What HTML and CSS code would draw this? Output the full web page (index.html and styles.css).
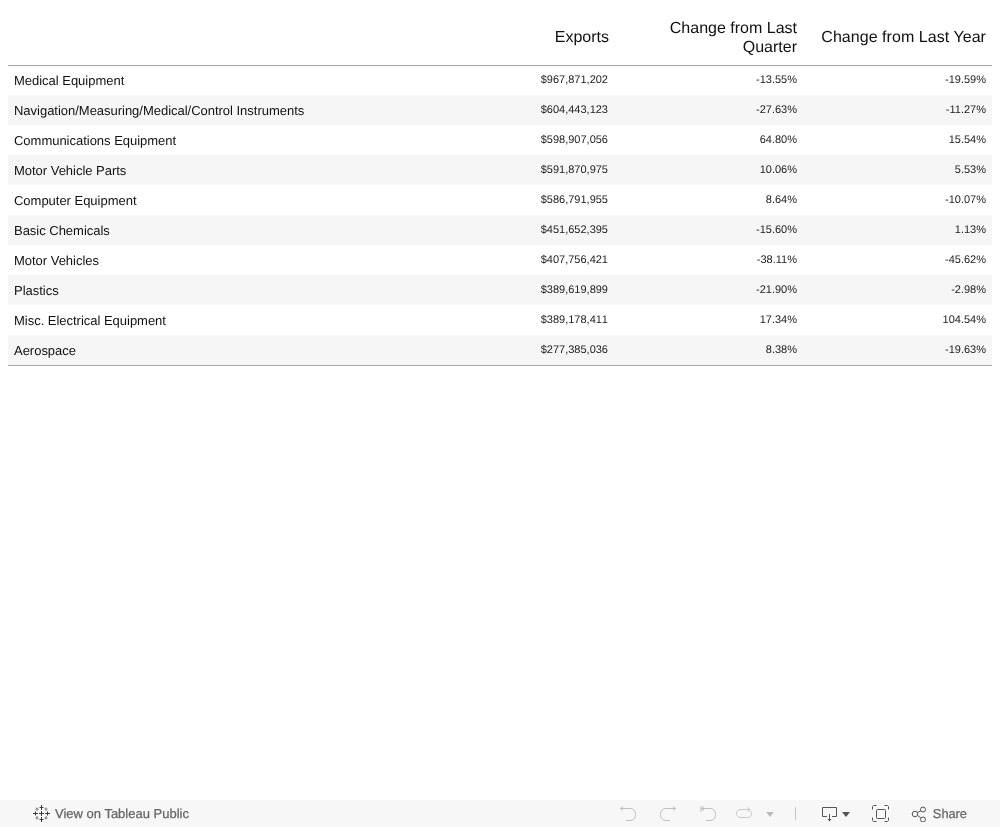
FILE: index.html
```html
<!DOCTYPE html>
<html lang="en">
<head>
<meta charset="utf-8">
<title>Exports</title>
<link rel="stylesheet" href="styles.css">
</head>
<body>
<div class="page">
  <main class="viz">
    <div class="row head">
      <div class="cell"></div>
      <div class="cell num exports">Exports</div>
      <div class="cell num quarter">Change from Last Quarter</div>
      <div class="cell num wide">Change from Last Year</div>
    </div>
    <div class="rows">
      <div class="row"><div class="cell name">Medical Equipment</div><div class="cell val money">$967,871,202</div><div class="cell val">-13.55%</div><div class="cell val">-19.59%</div></div>
      <div class="row"><div class="cell name">Navigation/Measuring/Medical/Control Instruments</div><div class="cell val money">$604,443,123</div><div class="cell val">-27.63%</div><div class="cell val">-11.27%</div></div>
      <div class="row"><div class="cell name">Communications Equipment</div><div class="cell val money">$598,907,056</div><div class="cell val">64.80%</div><div class="cell val">15.54%</div></div>
      <div class="row"><div class="cell name">Motor Vehicle Parts</div><div class="cell val money">$591,870,975</div><div class="cell val">10.06%</div><div class="cell val">5.53%</div></div>
      <div class="row"><div class="cell name">Computer Equipment</div><div class="cell val money">$586,791,955</div><div class="cell val">8.64%</div><div class="cell val">-10.07%</div></div>
      <div class="row"><div class="cell name">Basic Chemicals</div><div class="cell val money">$451,652,395</div><div class="cell val">-15.60%</div><div class="cell val">1.13%</div></div>
      <div class="row"><div class="cell name">Motor Vehicles</div><div class="cell val money">$407,756,421</div><div class="cell val">-38.11%</div><div class="cell val">-45.62%</div></div>
      <div class="row"><div class="cell name">Plastics</div><div class="cell val money">$389,619,899</div><div class="cell val">-21.90%</div><div class="cell val">-2.98%</div></div>
      <div class="row"><div class="cell name">Misc. Electrical Equipment</div><div class="cell val money">$389,178,411</div><div class="cell val">17.34%</div><div class="cell val">104.54%</div></div>
      <div class="row"><div class="cell name">Aerospace</div><div class="cell val money">$277,385,036</div><div class="cell val">8.38%</div><div class="cell val">-19.63%</div></div>
    </div>
  </main>
  <footer class="toolbar">
    <div class="public">
      <svg class="logo" width="17" height="17" viewBox="0 0 17 17" fill="none" stroke="#3c3c3c" stroke-width="1">
        <path d="M8.500 0v5M6.500 2.500h4M8.500 12v5M6.500 14.500h4M0 8.500h5M2.500 6.500v4M12 8.500h5M14.500 6.500v4"/>
        <path d="M8.500 6v5M6 8.500h5"/>
        <path d="M4 2.500v3.500M2.500 4h3M13 2.500v3.500M11.500 4h3M4 11v3.500M2.500 13h3M13 11v3.500M11.500 13h3" stroke="#666" stroke-width="0.8"/>
      </svg>
      <span>View on Tableau Public</span>
    </div>
    <div class="tools">
      <svg class="t-undo" width="18" height="17" viewBox="0 0 18 17" fill="none" stroke="#bdbdbd" stroke-width="1"><path d="M1.500 3.500H11C14.500 3.500 16.500 6 16.500 9.500S14.500 15.500 11 15.500H7M4 1.500L1.500 3.500 4 5.500"/></svg>
      <svg class="t-redo" width="18" height="17" viewBox="0 0 18 17" fill="none" stroke="#bdbdbd" stroke-width="1"><path d="M16.500 3.500H7C3.500 3.500 1.500 6 1.500 9.500S3.500 15.500 7 15.500H11M14 1.500L16.500 3.500 14 5.500"/></svg>
      <svg class="t-revert" width="18" height="17" viewBox="0 0 18 17" fill="none" stroke="#bdbdbd" stroke-width="1"><path d="M2 1v6M2.500 3.500H11C14.500 3.500 16.500 6 16.500 9.500S14.500 15.500 11 15.500H7M5 1.500L2.500 3.500 5 5.500"/></svg>
      <svg class="t-refresh" width="16" height="13" viewBox="0 0 16 13" fill="none" stroke="#c8c8c8" stroke-width="1"><path d="M14 2.500H5C2.500 2.500.5 4 .5 6.500S2.500 10.500 5 10.500h6.500C14 10.500 15.500 9 15.500 6.500 15.500 5 15 4 14 3.500M11.500.5L14 2.500 11.500 4.500"/></svg>
      <span class="caret light"></span>
      <span class="sep"></span>
      <svg class="t-device" width="17" height="17" viewBox="0 0 17 17" fill="none" stroke="#555" stroke-width="1"><path d="M6 11.500H1.500v-9h14v9H11M8.500 9v6"/><path d="M6.500 14h4l-2 2.500z" fill="#555" stroke="none"/></svg>
      <span class="caret"></span>
      <svg class="t-full" width="17" height="17" viewBox="0 0 17 17" fill="none" stroke="#555" stroke-width="1"><path d="M.5 4.500v-3l1-1h3M12.500.5h3l1 1v3M16.500 12.500v3l-1 1h-3M4.500 16.500h-3l-1-1v-3"/><rect x="4.500" y="4.500" width="9" height="9" rx="1"/></svg>
      <div class="share">
        <svg width="17" height="17" viewBox="0 0 17 17" fill="none" stroke="#555" stroke-width="1"><circle cx="5" cy="9" r="2.800"/><circle cx="13" cy="4.500" r="2.500"/><circle cx="13" cy="14.500" r="2.500"/><path d="M7.500 7.600l3.300-1.900M7.500 10.400l3.300 2.500"/></svg>
        <span>Share</span>
      </div>
    </div>
  </footer>
</div>
</body>
</html>
```
FILE: styles.css
```css
* { box-sizing: border-box; }
html, body { margin: 0; padding: 0; background: #fff; }
body { font-family: "Liberation Sans", Arial, sans-serif; color: #000; text-rendering: geometricPrecision; }
.page { height: 827px; display: flex; flex-direction: column; overflow: hidden; will-change: opacity; }
.viz { flex: 1; padding: 8px 8px 0; }
.row { display: grid; grid-template-columns: 417px 189px 189px 189px; height: 30px; align-items: center; }
.rows { border-bottom: 1px solid #a9a9a9; }
.rows .row:first-child { box-shadow: inset 0 1px 0 #a9a9a9; }
.rows .row:nth-child(even) { background: #f6f6f6; }
.head { height: 57px; font-size: 16px; line-height: 19px; padding-top: 1px; }
.cell { padding: 0 6px; }
.num { text-align: right; color: #111; padding-left: 30px; }
.exports { padding-right: 5px; }
.quarter { padding-top: 2px; }
.wide { padding-left: 0; white-space: nowrap; letter-spacing: 0.05px; }
.name { font-size: 13px; line-height: 15px; color: #111; letter-spacing: -0.02px; }
.val { font-size: 11px; line-height: 13px; text-align: right; color: #222; }
.money { font-kerning: none; }
.toolbar { height: 27px; background: #f7f7f7; display: flex; justify-content: space-between; align-items: center; }
.public { display: flex; align-items: center; gap: 5px; padding-left: 33px; }
.public span, .share span { font-family: "Liberation Sans", Arial, sans-serif; font-size: 13px; color: #666; -webkit-text-stroke: 0.25px #666; }
.share span { font-size: 12.8px; }
.tools { display: flex; align-items: center; padding-right: 33px; }
.tools svg { flex: none; }
.t-undo { margin-right: 22px; }
.t-redo { margin-right: 22px; }
.t-revert { margin-right: 19px; }
.t-refresh { margin-right: 14px; }
.caret { width: 0; height: 0; margin-top: 2px; border-left: 4px solid transparent; border-right: 4px solid transparent; border-top: 5px solid #555; }
.caret.light { border-top-color: #bdbdbd; }
.sep { width: 1px; height: 13px; background: #c4c4c4; margin: 0 25px 0 21px; }
.t-device { margin-right: 4px; }
.t-full { margin: 0 21px 0 22px; }
.share { display: flex; align-items: center; gap: 6px; }
```
